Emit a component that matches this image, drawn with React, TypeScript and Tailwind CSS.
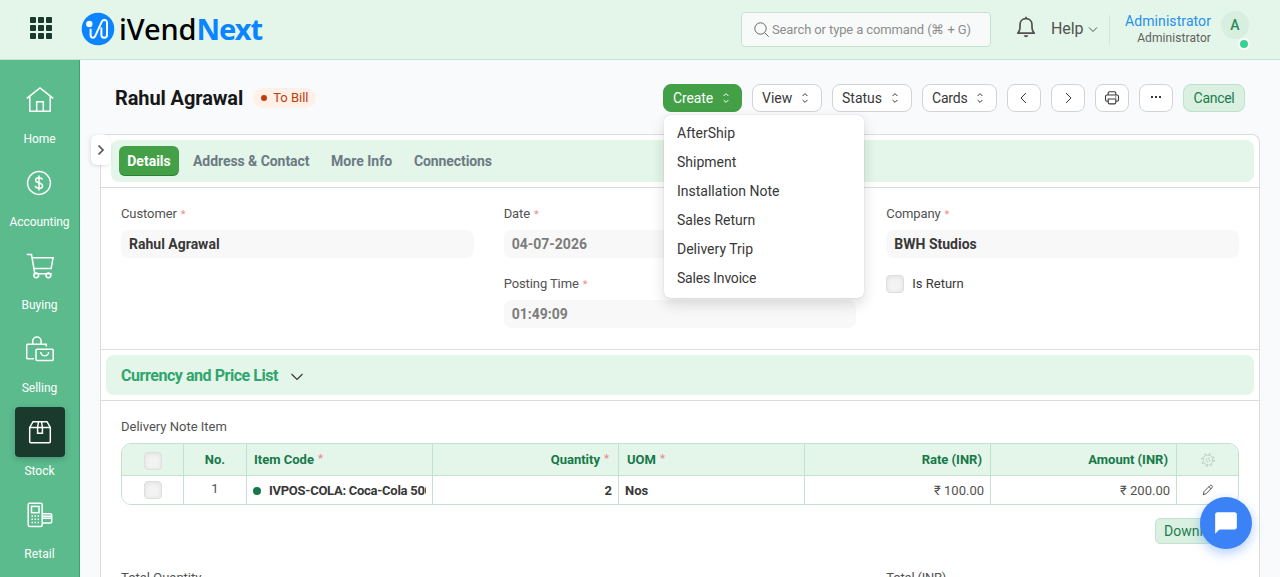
import type { ReactNode } from "react";
import clsx from "clsx";

type Align = "left" | "right" | "center";

const sidebarItems: { label: string; icon: ReactNode; tracking: string; active?: boolean }[] = [
  {
    label: "Home",
    tracking: "tracking-[-0.1px]",
    icon: <path d="M0.8 11.4 14 1l13.2 10.4M3.8 9.600V24.300h20.400V9.600M10.700 24.300v-9.600h6.600v9.600" />,
  },
  {
    label: "Accounting",
    tracking: "tracking-[-0.080px]",
    icon: (
      <>
        <circle cx="14" cy="13" r="11.4" />
        <path d="M17.4 9.7c-.3-1.400-1.600-2-3.400-2-2 0-3.400.9-3.400 2.500 0 3.700 7 1.700 7 5.500 0 1.700-1.500 2.600-3.600 2.600-2 0-3.500-.8-3.700-2.400M14 5.500v15" />
      </>
    ),
  },
  {
    label: "Buying",
    tracking: "tracking-normal",
    icon: (
      <>
        <path d="M0.700 1.500h4.800l3.300 19.200h17M6.500 4.800h20.600l-2 10.800H8.100" />
        <circle cx="10.200" cy="22.300" r="2.400" />
        <circle cx="22.400" cy="22.300" r="2.400" />
      </>
    ),
  },
  {
    label: "Selling",
    tracking: "tracking-normal",
    icon: (
      <>
        <path d="M8 22.700H1.700c-.6 0-1-.4-1-1V9.300c0-.6.400-1 1-1h18.600v2.200M6.700 8.300V5.300a4.200 4.200 0 0 1 8.400 0v3" />
        <rect x="10" y="13.200" width="17.200" height="11.200" rx="1" />
        <path d="M14.800 15.900a3.900 3.900 0 0 0 7.800 0" />
      </>
    ),
  },
  {
    label: "Stock",
    tracking: "tracking-normal",
    active: true,
    icon: (
      <path d="M3.700 8.500 7 2.700h14l3.300 5.800v14.100c0 .7-.4 1.100-1.100 1.100H4.800c-.7 0-1.100-.4-1.100-1.100V8.500h20.600M12.500 2.700l-.9 5.800v5.700h4.800V8.500l-.9-5.800" />
    ),
  },
  {
    label: "Retail",
    tracking: "tracking-[0.1px]",
    icon: (
      <>
        <rect x="2.200" y="1.200" width="14" height="23.200" rx="1.500" />
        <rect x="5.500" y="4.400" width="7.500" height="6.300" />
        <path d="M5.500 14h7.500M5.500 17.300h7.500M5.500 20.600h7.500" strokeDasharray="1.500 1.500" />
        <path d="M16.200 11.700h8c.9 0 1.500.5 1.500 1.400v6.600c0 .9-.6 1.400-1.500 1.400h-8M16.200 14.200h9.500M16.200 16.200h9.500" />
      </>
    ),
  },
];

const createMenu = [
  { label: "AfterShip", tracking: "tracking-normal" },
  { label: "Shipment", tracking: "tracking-normal" },
  { label: "Installation Note", tracking: "tracking-normal" },
  { label: "Sales Return", tracking: "tracking-normal" },
  { label: "Delivery Trip", tracking: "tracking-normal" },
  { label: "Sales Invoice", tracking: "tracking-[-0.2px]" },
];

const Required = () => <span className="ml-1 text-[11px] text-[#f08c8c]">*</span>;

const Checkbox = () => (
  <span className="block size-[18px] shrink-0 rounded-[4px] border border-[#dedede] bg-[#f3f3f3] shadow-[inset_0_1px_5px_rgba(0,0,0,0.08)]" />
);

const SelectArrows = () => (
  <svg width="8" height="12" viewBox="0 0 8 12" fill="none" stroke="currentColor" strokeWidth="1">
    <path d="M1.600 4 4 1.600 6.400 4M1.600 8 4 10.400 6.400 8" />
  </svg>
);

const Header = () => (
  <header className="flex h-[60px] shrink-0 items-start border-b border-[#c3e2d0] bg-[#e4f5e9]">
    <div className="mt-[17px] ml-[30px] grid grid-cols-3 gap-[2.500px]">
      {Array.from({ length: 9 }, (_, i) => (
        <span key={i} className="size-[5.500px] rounded-[1px] bg-[#1a3a2d]" />
      ))}
    </div>
    <div className="mt-[12px] ml-[29.500px] flex items-center">
      <svg width="34" height="34" viewBox="0 0 34 34" fill="none" stroke="white" strokeLinecap="round">
        <circle cx="17" cy="17" r="16.300" fill="#0a84ff" stroke="none" />
        <circle cx="8.300" cy="12" r="3.200" fill="white" stroke="none" />
        <path
          strokeWidth="2"
          d="M9.600 17.500v5.600c0 3.200 3.400 3.700 4.700.8l6.400-14.100c1.300-2.900 5.300-2.200 5.300.9v12.600c0 3.300-5.600 3.300-5.600 0v-7"
        />
      </svg>
      <span className="ml-[4px] font-['Noto_Sans'] text-[29px] leading-[34px] font-medium text-black">
        <span className="tracking-[-0.100px]">iVend</span>
        <span className="font-bold tracking-[-1px] text-[#0a84ff]">Next</span>
      </span>
    </div>
    <div className="mt-3 mr-[25px] ml-auto flex h-[35px] w-[250px] items-center rounded border border-[#c3e2d0] bg-[#f8fafa] pl-3 text-[13px] text-[#8d8d8d]">
      <svg width="16" height="16" viewBox="0 0 16 16" fill="none" stroke="#666" strokeWidth="1">
        <circle cx="6.500" cy="6.500" r="5.700" />
        <path d="m10.700 10.700 4 4" />
      </svg>
      <span className="mt-px ml-[2px] tracking-[-0.120px] whitespace-nowrap">Search or type a command (⌘ + G)</span>
    </div>
    <svg className="mt-4" width="20" height="22" viewBox="0 0 20 22" fill="none" stroke="#505050" strokeWidth="1.700">
      <path d="M1.800 17.200h16.400c-1.700-1.600-2.200-3-2.200-5.600V8.900C16 5.300 13.600 2.700 10 2.700S4 5.300 4 8.900v2.700c0 2.600-.5 4-2.200 5.600Z" strokeLinejoin="round" />
      <path d="M10 .7v2" />
      <path d="M7.700 19.300h4.600c-.3 1.300-1.200 2-2.300 2s-2-.7-2.300-2Z" fill="#505050" stroke="none" />
    </svg>
    <div className="mt-[17px] ml-[15px] flex items-center text-base leading-6 text-[#525252]">
      <span className="w-[37px] tracking-[-0.1px] whitespace-nowrap">Help</span>
      <svg width="10" height="10" viewBox="0 0 10 10" fill="none" stroke="currentColor">
        <path d="m1 3.500 4 4 4-4" />
      </svg>
    </div>
    <div className="mt-[15px] ml-[11px] h-[30px] w-px bg-[#d5e3da]" />
    <div className="mt-3 flex w-[101px] flex-col items-end">
      <span className="text-sm leading-[18px] tracking-[0.080px] text-[#2490ef]">Administrator</span>
      <span className="text-xs leading-4 tracking-[0.080px] text-[#606060]">Administrator</span>
    </div>
    <div className="relative mt-[11px] mr-[31px] ml-[10px] flex size-7 items-center justify-center rounded-full bg-[#d8efdf] text-sm font-medium text-[#2b8a5b]">
      A
      <span className="absolute top-[27px] left-[17px] size-[12px] rounded-full border-2 border-white bg-[#36d293]" />
    </div>
  </header>
);

const Sidebar = () => (
  <nav className="flex w-20 shrink-0 flex-col items-center border-r border-[#36a573] bg-[#5bbb8d] pt-[15px] text-white">
    {sidebarItems.map((item) => (
      <div key={item.label} className="flex h-[83px] shrink-0 flex-col items-center">
        <div
          className={clsx(
            "flex size-[50px] items-center justify-center rounded",
            item.active && "bg-[#1a3a2d] shadow-[0_2px_6px_rgba(0,0,0,0.2)]"
          )}
        >
          <svg width="28" height="26" viewBox="0 0 28 26" fill="none" stroke="currentColor" strokeWidth="1.500">
            {item.icon}
          </svg>
        </div>
        <span className={clsx("mt-1.5 text-xs leading-[17px]", item.tracking)}>{item.label}</span>
      </div>
    ))}
  </nav>
);

const ToolbarButton = ({ children, className }: { children: ReactNode; className?: string }) => (
  <button
    className={clsx(
      "flex h-7 items-center rounded-lg border text-sm whitespace-nowrap",
      className ?? "w-[34px] justify-center border-[#d1d3d8] bg-white text-[#383838]"
    )}
  >
    {children}
  </button>
);

const Toolbar = () => (
  <div className="flex h-[74px] shrink-0 items-start pt-6 pr-[15px] pl-[15px]">
    <h1 className="text-xl leading-7 font-bold tracking-[-0.1px] text-[#171717]">Rahul Agrawal</h1>
    <span className="mt-1 ml-[10px] flex h-5 w-[63px] items-center rounded-full bg-[#fff1e7] pl-2 text-[13px] whitespace-nowrap text-[#bd3e0c]">
      <span className="mr-1.5 size-1.5 rounded-full bg-[#bd3e0c]" />
      To Bill
    </span>
    <div className="ml-auto flex gap-[10px]">
      <div className="relative">
        <ToolbarButton className="w-[79px] justify-between border-[#43a047] bg-[#43a047] pr-[11px] pl-[9px] tracking-[-0.1px] text-white">
          Create <SelectArrows />
        </ToolbarButton>
        <div className="absolute top-[31px] left-px z-10 w-[200px] rounded-md bg-white pt-[3px] pb-[6px] shadow-[0_0_1px_rgba(0,0,0,0.25),0_6px_14px_rgba(0,0,0,0.14)]">
          {createMenu.map((item) => (
            <div
              key={item.label}
              className={clsx("flex h-[29px] items-center pl-[13px] text-sm text-[#383838]", item.tracking)}
            >
              {item.label}
            </div>
          ))}
        </div>
      </div>
      <ToolbarButton className="w-[70px] justify-between border-[#d1d3d8] bg-white pr-3 pl-[9px] text-[#383838]">
        View <SelectArrows />
      </ToolbarButton>
      <ToolbarButton className="w-[80px] justify-between border-[#d1d3d8] bg-white pr-3 pl-[9px] text-[#383838]">
        Status <SelectArrows />
      </ToolbarButton>
      <ToolbarButton className="w-[75px] justify-between border-[#d1d3d8] bg-white pr-3 pl-[9px] tracking-[-0.2px] text-[#383838]">
        Cards <SelectArrows />
      </ToolbarButton>
      <ToolbarButton>
        <svg width="16" height="16" viewBox="0 0 16 16" fill="none" stroke="currentColor">
          <path d="m10 3-5 5 5 5" />
        </svg>
      </ToolbarButton>
      <ToolbarButton>
        <svg width="16" height="16" viewBox="0 0 16 16" fill="none" stroke="currentColor">
          <path d="m6 3 5 5-5 5" />
        </svg>
      </ToolbarButton>
      <ToolbarButton>
        <svg width="16" height="16" viewBox="0 0 16 16" fill="none" stroke="currentColor" strokeWidth="1.100">
          <path d="M4.200 5V3.200c0-.9.500-1.400 1.400-1.400h4.800c.9 0 1.400.5 1.400 1.400V5M4.200 11.200H3c-.9 0-1.500-.6-1.500-1.500V6.500C1.500 5.600 2.100 5 3 5h10c.9 0 1.500.6 1.500 1.500v3.200c0 .9-.6 1.500-1.500 1.500h-1.200M11 7h1.200" />
          <path d="M4.200 9h7.600v3.500c0 .9-.5 1.400-1.400 1.400H5.600c-.9 0-1.400-.5-1.400-1.400V9Z" />
        </svg>
      </ToolbarButton>
      <ToolbarButton>
        <svg width="16" height="16" viewBox="0 0 16 16" fill="currentColor">
          <path d="M3 6h2v2H3zM7 6h2v2H7zM11 6h2v2h-2z" />
        </svg>
      </ToolbarButton>
      <ToolbarButton className="w-[62px] justify-center border-[#bfe0cb] bg-[#daf0e1] tracking-[-0.3px] text-[#1b7d4d]">
        Cancel
      </ToolbarButton>
    </div>
  </div>
);

const Field = ({ label, value, muted }: { label: string; value: string; muted?: boolean }) => (
  <div className="flex flex-col">
    <label className="mb-2 h-[18px] text-[13px] leading-[20px] tracking-[-0.1px] text-[#525252]">
      {label}
      <Required />
    </label>
    <div
      className={clsx(
        "flex h-7 items-center rounded-lg bg-[#f8f8f8] px-2 text-sm leading-[18px] font-bold",
        muted ? "text-[#7c7c7c]" : "text-[#383838]"
      )}
    >
      {value}
    </div>
  </div>
);

const DetailsSection = () => (
  <section className="grid h-[162px] shrink-0 grid-cols-3 gap-[30px] border-b border-[#dcdcdc] px-5 pt-4">
    <Field label="Customer" value="Rahul Agrawal" />
    <div className="flex flex-col gap-4">
      <Field label="Date" value="04-07-2026" muted />
      <Field label="Posting Time" value="01:49:09" muted />
    </div>
    <div className="flex flex-col gap-4">
      <Field label="Company" value="BWH Studios" />
      <div className="flex items-center gap-2 text-[13px] leading-[18px] text-[#383838]">
        <Checkbox />
        <span className="pt-px">Is Return</span>
      </div>
    </div>
  </section>
);

const Cell = ({ children, align = "left", className }: { children?: ReactNode; align?: Align; className?: string }) => (
  <div
    className={clsx(
      "flex min-w-0 items-center overflow-hidden border-r border-[#c3e2d0] whitespace-nowrap last:border-r-0",
      align === "right" && "justify-end",
      align === "center" && "justify-center",
      className
    )}
  >
    {children}
  </div>
);

const ItemsTable = () => (
  <div className="h-[62px] overflow-hidden rounded-[10px] border border-[#c3e2d0]">
    <div className="grid h-8 grid-cols-[62px_63px_186px_186px_186px_186px_186px_61px] border-b border-[#c3e2d0] bg-[#e4f5e9] text-[13px] font-bold text-[#17794a]">
      <Cell align="center" className="pt-[3px]"><Checkbox /></Cell>
      <Cell align="center">No.</Cell>
      <Cell className="pl-[7px]">Item Code<Required /></Cell>
      <Cell align="right" className="pr-[9px]">Quantity<Required /></Cell>
      <Cell className="pl-2">UOM<Required /></Cell>
      <Cell align="right" className="pr-2">Rate (INR)</Cell>
      <Cell align="right" className="pr-2">Amount (INR)</Cell>
      <Cell align="center">
        <svg width="14" height="14" viewBox="0 0 14 14" fill="none" stroke="#a3b8aa" strokeWidth="0.900" strokeDasharray="1.500 1">
          <circle cx="7" cy="7" r="4.800" />
          <circle cx="7" cy="7" r="1.800" />
          <circle cx="7" cy="7" r="6.200" strokeDasharray="2 2.900" />
        </svg>
      </Cell>
    </div>
    <div className="grid h-7 grid-cols-[62px_63px_186px_186px_186px_186px_186px_61px] bg-white text-[13px] text-[#525252]">
      <Cell align="center"><Checkbox /></Cell>
      <Cell align="center" className="pb-[2px]">1</Cell>
      <Cell className="pt-[2px] pr-1.5 pl-1.5 font-bold text-[#383838]">
        <span className="mr-2 size-2 shrink-0 rounded-full bg-[#17794a]" />
        <span className="overflow-hidden tracking-[-0.270px]">IVPOS-COLA: Coca-Cola 500 ml</span>
      </Cell>
      <Cell align="right" className="pt-[2px] pr-1.5 font-bold text-[#383838]">2</Cell>
      <Cell className="pt-[2px] pl-1.5 font-bold text-[#383838]">Nos</Cell>
      <Cell align="right" className="pt-[2px] pr-1.5">₹ 100.00</Cell>
      <Cell align="right" className="pt-[2px] pr-1.5">₹ 200.00</Cell>
      <Cell align="center">
        <svg width="12" height="12" viewBox="0 0 12 12" fill="none" stroke="#444" strokeWidth="0.900">
          <path d="m1.300 10.700.8-3.200 5.700-5.700c.7-.7 1.500-.7 2.100-.1.600.6.600 1.400-.1 2.100L4.200 9.700l-2.900 1ZM7 2.700 9.200 5" />
        </svg>
      </Cell>
    </div>
  </div>
);

const App = () => {
  return (
    <div className="flex h-[577px] w-full flex-col overflow-hidden bg-[#f8fafc] font-[Roboto,sans-serif]">
      <Header />
      <div className="flex min-h-0 flex-1">
        <Sidebar />
        <main className="flex min-w-0 flex-1 flex-col px-5">
          <Toolbar />
          <div className="relative flex flex-1 flex-col rounded-t-lg border border-b-0 border-[#dcdcdc] bg-white">
            <button className="absolute top-0 -left-[10px] flex h-[30px] w-5 items-center justify-center rounded-md bg-white shadow-[-1px_1px_4px_rgba(0,0,0,0.12)]">
              <svg width="8" height="12" viewBox="0 0 8 12" fill="none" stroke="#555" strokeWidth="1.700">
                <path d="m1.500 1.500 4.500 4.500-4.500 4.500" />
              </svg>
            </button>
            <div className="h-[53px] shrink-0 border-b border-[#dcdcdc] pt-[5px] pr-[5px] pl-[10px]">
              <div className="flex h-[42px] items-center rounded-lg bg-[#e4f5e9] pl-2 text-sm font-bold whitespace-nowrap text-[#6c7a84]">
                <span className="flex h-[30px] w-[60px] items-center justify-center rounded-md border-b border-[#2b8034] bg-[#43a047] text-white">
                  Details
                </span>
                <span className="ml-[14px] w-[138px] tracking-[-0.060px]">Address &amp; Contact</span>
                <span className="w-[83px]">More Info</span>
                <span className="tracking-[-0.1px]">Connections</span>
              </div>
            </div>
            <DetailsSection />
            <div className="h-[51px] shrink-0 border-b border-[#dcdcdc] px-[5px] pt-[5px]">
              <div className="flex h-10 items-center rounded-lg bg-[#e4f5e9] pt-px pl-[15px] text-base font-bold text-[#30a66d]">
                <span className="tracking-[-0.450px]">Currency and Price List</span>
                <svg className="mt-[3px] ml-3" width="14" height="10" viewBox="0 0 14 10" fill="none" stroke="#333" strokeWidth="1.100">
                  <path d="m1.500 2 5.500 5.500L12.500 2" />
                </svg>
              </div>
            </div>
            <section className="flex flex-col px-5 pt-4">
              <p className="mb-2 h-[18px] text-[13px] leading-[20px] text-[#525252]">Delivery Note Item</p>
              <ItemsTable />
              <button className="mt-[13px] flex h-[26px] w-[84px] items-center self-end rounded-[5px] border border-[#c3e2d0] bg-[#daf0e1] pl-2 text-sm text-[#1b7d4d]">
                Download
              </button>
              <div className="mt-[24px] grid grid-cols-3 gap-[30px] text-[13px] leading-[20px] text-[#525252]">
                <span>Total Quantity</span>
                <span className="col-start-3 tracking-[-0.2px]">Total (INR)</span>
              </div>
            </section>
          </div>
        </main>
      </div>
      <button className="fixed right-7 bottom-7 flex size-[52px] items-center justify-center rounded-full bg-[#3b82f6] shadow-[0_4px_12px_rgba(59,130,246,0.4)]">
        <svg width="26" height="26" viewBox="0 0 24 24" fill="white">
          <path d="M20 2H4c-1.100 0-2 .9-2 2v18l4-4h14c1.100 0 2-.9 2-2V4c0-1.100-.9-2-2-2z" />
        </svg>
      </button>
    </div>
  );
};

export default App;
